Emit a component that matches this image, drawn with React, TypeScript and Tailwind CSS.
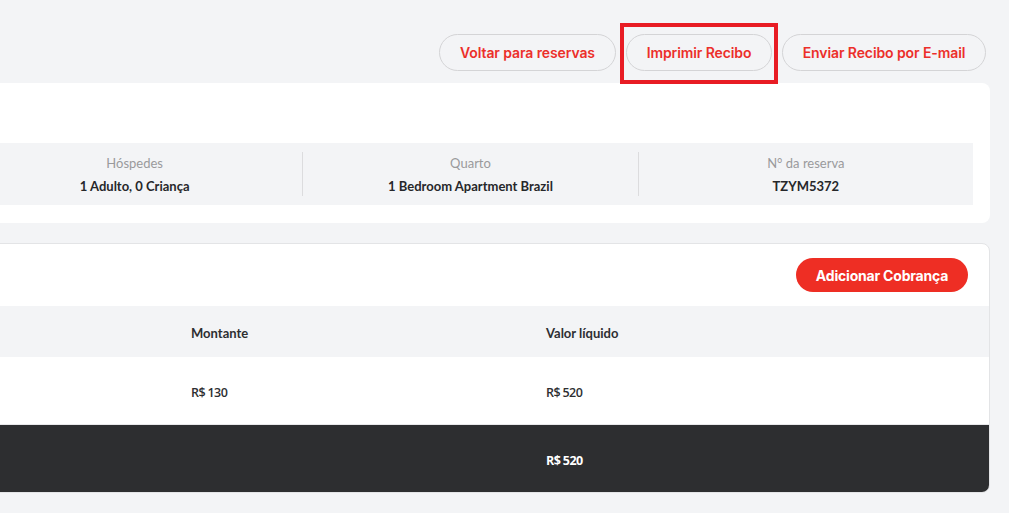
import React from "react";

const font = { fontFamily: "Lato, 'Open Sans', Arial, sans-serif" };
const btnFont = { fontFamily: "Inter, Lato, Arial, sans-serif" };

function OutlineBtn({ children, w }: { children: React.ReactNode; w: string }) {
  return (
    <button
      className={`h-[37px] ${w} rounded-full border border-[#d4d4d6] bg-[#f3f4f6] text-[14px] font-semibold tracking-[-0.1px] text-[#ec2f2a] flex items-center justify-center`}
      style={btnFont}
    >
      {children}
    </button>
  );
}

export default function App() {
  return (
    <div className="w-[1009px] h-[513px] overflow-hidden bg-[#f3f4f6]" style={font}>
      <div className="ml-[-50px] mr-[19px]">
        {/* action buttons */}
        <div className="flex justify-end items-start gap-[10px] pt-[34px] pr-[4px] h-[83px]">
          <OutlineBtn w="w-[177px]">Voltar para reservas</OutlineBtn>
          <div className="relative">
            <OutlineBtn w="w-[146px]">Imprimir Recibo</OutlineBtn>
            <div className="absolute left-[-6px] right-[-6px] top-[-11px] bottom-[-13px] border-[4px] border-[#e81c24] pointer-events-none" />
          </div>
          <OutlineBtn w="w-[204px]">Enviar Recibo por E-mail</OutlineBtn>
        </div>

        {/* summary card */}
        <div className="bg-white rounded-[8px] h-[140px] pt-[60px] px-[17px]">
          <div className="bg-[#f3f4f6] h-[62px] grid grid-cols-3 items-center">
            {[
              ["Hóspedes", "1 Adulto, 0 Criança"],
              ["Quarto", "1 Bedroom Apartment Brazil"],
              ["N° da reserva", "TZYM5372"],
            ].map(([l, v], i) => (
              <div
                key={l}
                className={`h-[44px] flex flex-col items-center justify-center gap-[9px] ${i > 0 ? "border-l border-[#dcdcde]" : ""}`}
              >
                <div className="text-[13px] leading-[14px] text-[#9a9a9c]">{l}</div>
                <div className="text-[13px] leading-[14px] font-bold text-[#26272a]">{v}</div>
              </div>
            ))}
          </div>
        </div>

        {/* charges card */}
        <div className="mt-[20px] bg-white rounded-[8px] border border-[#e3e4e6] overflow-hidden">
          <div className="h-[62px] flex items-center justify-end pr-[21px]">
            <button
              className="h-[34px] w-[172px] rounded-full bg-[#ee2e24] text-white text-[14px] font-bold tracking-[-0.2px] flex items-center justify-center"
              style={btnFont}
            >
              Adicionar Cobrança
            </button>
          </div>
          <div className="h-[51px] bg-[#f3f4f6] flex items-center pt-[4px] text-[13px] font-bold text-[#2d2e31]">
            <div className="w-[240px]" />
            <div className="w-[355px]">Montante</div>
            <div>Valor líquido</div>
          </div>
          <div
            className="h-[68px] flex items-center pt-[6px] text-[12.5px] font-semibold text-[#2d2e31] border-b border-[#e8e8ea]"
            style={{ fontFamily: "'Open Sans', Arial, sans-serif", letterSpacing: "-0.6px" }}
          >
            <div className="w-[240px]" />
            <div className="w-[355px]">R$ 130</div>
            <div>R$ 520</div>
          </div>
          <div
            className="h-[67px] bg-[#2d2e30] flex items-center pt-[6px] text-[12.5px] font-bold text-white"
            style={{ fontFamily: "'Open Sans', Arial, sans-serif", letterSpacing: "-0.6px" }}
          >
            <div className="w-[240px]" />
            <div className="w-[355px]" />
            <div>R$ 520</div>
          </div>
        </div>
      </div>
    </div>
  );
}
